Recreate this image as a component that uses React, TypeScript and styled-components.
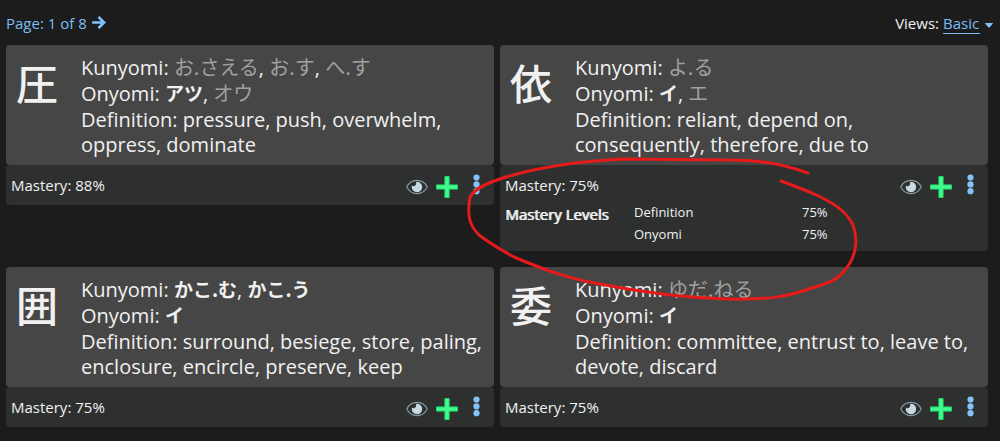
import React from "react";
import styled, { createGlobalStyle } from "styled-components";

const GlobalStyle = createGlobalStyle`
  * { box-sizing: border-box; }
  body {
    margin: 0;
    background: #1c1c1c;
    color: #f1f1f1;
    font-family: "Open Sans", "Noto Sans", "Noto Sans CJK JP", sans-serif;
    font-size: 15px;
    line-height: 20px;
  }
  button, select { font: inherit; color: inherit; }
`;

const Page = styled.div`
  position: relative;
  padding: 12px 12px 12px 6px;
`;

const TopBar = styled.header`
  display: flex;
  justify-content: space-between;
  align-items: center;
  height: 21px;
  margin: 0 -6px 12px 0;
`;

const Pager = styled.nav`
  display: flex;
  align-items: center;
  gap: 5px;
  color: #7cbdf5;
`;

const IconButton = styled.button`
  display: flex;
  padding: 0;
  border: 0;
  background: none;
  cursor: pointer;
`;

const ViewPicker = styled.label`
  display: flex;
  align-items: center;
  gap: 4px;
`;

const ViewSelect = styled.select`
  appearance: none;
  height: 20px;
  padding: 0;
  border: 0;
  border-radius: 0;
  box-shadow: 0 1px #7cbdf5;
  background: none;
  color: #7cbdf5;
  line-height: 20px;
`;

const CardGrid = styled.main`
  display: grid;
  grid-template-columns: repeat(2, minmax(0, 1fr));
  align-items: start;
  gap: 16px 6px;
`;

const Card = styled.article`
  min-width: 0;
`;

const CardBody = styled.div`
  display: flex;
  gap: 20px;
  min-height: 120px;
  padding: 10px 8px 8px 10px;
  border-radius: 4px;
  background: #464646;
`;

const Kanji = styled.h2`
  flex: none;
  width: 45px;
  margin: 5px 0 0;
  font-family: "Noto Sans CJK JP", sans-serif;
  font-size: 42px;
  font-weight: 500;
  line-height: 44px;
`;

const Readings = styled.div`
  min-width: 0;
  font-size: 20px;
  line-height: 26px;
`;

const Line = styled.p`
  margin: 0;
`;

const Definition = styled.p`
  margin: 0;
  line-height: 25px;
`;

const Reading = styled.span<{ $known: boolean }>`
  font-family: "Noto Sans CJK JP", sans-serif;
  font-size: ${(p) => (p.$known ? 19 : 20)}px;
  line-height: 20px;
  font-weight: ${(p) => (p.$known ? 700 : 400)};
  color: ${(p) => (p.$known ? "#f1f1f1" : "#a0a0a0")};
`;

const CardFooter = styled.div`
  border-radius: 4px;
  background: #2e3030;
`;

const FooterRow = styled.div`
  display: flex;
  justify-content: space-between;
  align-items: center;
  height: 40px;
  padding: 0 14px 0 5px;
`;

const Actions = styled.div`
  display: flex;
  align-items: center;
  gap: 8px;
  padding-top: 3px;
`;

const MoreButton = styled(IconButton)`
  margin: 0 0 5px 7px;
`;

const Levels = styled.section`
  display: flex;
  padding: 0 0 6px 5px;
`;

const LevelsTitle = styled.h3`
  width: 129px;
  margin: -1px 0 0;
  font-size: 15px;
  font-weight: 400;
  line-height: 20px;
  text-shadow: 1px 0 currentColor;
`;

const LevelTable = styled.table`
  border-collapse: collapse;
  font-size: 13px;
  line-height: 20px;
  margin-top: -4px;
  th { width: 168px; padding: 1px 0; font-weight: 400; text-align: left; }
  td { padding: 1px 0; }
`;

const Annotation = styled.svg`
  position: absolute;
  top: 0;
  left: 0;
  pointer-events: none;
`;

const ArrowIcon = () => (
  <svg width="14" height="14" viewBox="0 0 14 14" fill="none" stroke="#7fc1fa" strokeWidth="2.6" aria-hidden="true">
    <path d="M0.2 6.5H12M6.5 0.9L12.1 6.5L6.5 12.1" />
  </svg>
);

const CaretIcon = () => (
  <svg width="10" height="10" viewBox="0 0 10 10" aria-hidden="true">
    <path d="M0.8 5H9.2L5.8 9.2Q5 10 4.2 9.2Z" fill="#84c3f9" />
  </svg>
);

const EyeIcon = () => (
  <svg width="22" height="16" viewBox="0 0 22 16" aria-hidden="true">
    <path d="M0.8 8C5 -0.8 17 -0.8 21.2 8C17 16.8 5 16.8 0.8 8Z" fill="none" stroke="#87979d" strokeWidth="1.2" />
    <path d="M11 2.8A5.2 5.2 0 1 1 6 6.5C7 8.2 11.2 6.8 10 3Z" fill="#c5dae4" />
  </svg>
);

const PlusIcon = () => (
  <svg width="22" height="22" viewBox="0 0 22 22" aria-hidden="true">
    <path d="M8.9 0.5H13.1V8.9H21.5V13.1H13.1V21.5H8.9V13.1H0.5V8.9H8.9Z" fill="#42fb8d" stroke="#20d76b" strokeWidth="1" />
  </svg>
);

const DotsIcon = () => (
  <svg width="7" height="21" viewBox="0 0 7 21" fill="#84c3f9" aria-hidden="true">
    <circle cx="3.5" cy="3.5" r="3.1" />
    <circle cx="3.5" cy="10.4" r="3.1" />
    <circle cx="3.5" cy="17.2" r="3.1" />
  </svg>
);

type ReadingItem = { text: string; known?: boolean };
type Entry = {
  kanji: string;
  kunyomi: ReadingItem[];
  onyomi: ReadingItem[];
  definition: string;
  mastery: string;
  levels?: [string, string][];
};

const entries: Entry[] = [
  {
    kanji: "圧",
    kunyomi: [{ text: "お.さえる" }, { text: "お.す" }, { text: "へ.す" }],
    onyomi: [{ text: "アツ", known: true }, { text: "オウ" }],
    definition: "pressure, push, overwhelm, oppress, dominate",
    mastery: "88%",
  },
  {
    kanji: "依",
    kunyomi: [{ text: "よ.る" }],
    onyomi: [{ text: "イ", known: true }, { text: "エ" }],
    definition: "reliant, depend on, consequently, therefore, due to",
    mastery: "75%",
    levels: [["Definition", "75%"], ["Onyomi", "75%"]],
  },
  {
    kanji: "囲",
    kunyomi: [{ text: "かこ.む", known: true }, { text: "かこ.う", known: true }],
    onyomi: [{ text: "イ", known: true }],
    definition: "surround, besiege, store, paling, enclosure, encircle, preserve, keep",
    mastery: "75%",
  },
  {
    kanji: "委",
    kunyomi: [{ text: "ゆだ.ねる" }],
    onyomi: [{ text: "イ", known: true }],
    definition: "committee, entrust to, leave to, devote, discard",
    mastery: "75%",
  },
];

const ReadingLine = ({ label, items }: { label: string; items: ReadingItem[] }) => (
  <Line>
    {label}:{" "}
    {items.map((item, i) => (
      <React.Fragment key={item.text}>
        {i > 0 && ", "}
        <Reading lang="ja" $known={!!item.known}>{item.text}</Reading>
      </React.Fragment>
    ))}
  </Line>
);

const KanjiCard = ({ entry }: { entry: Entry }) => (
  <Card>
    <CardBody>
      <Kanji lang="ja">{entry.kanji}</Kanji>
      <Readings>
        <ReadingLine label="Kunyomi" items={entry.kunyomi} />
        <ReadingLine label="Onyomi" items={entry.onyomi} />
        <Definition>Definition: {entry.definition}</Definition>
      </Readings>
    </CardBody>
    <CardFooter>
      <FooterRow>
        <span>Mastery: {entry.mastery}</span>
        <Actions>
          <IconButton aria-label="Show details"><EyeIcon /></IconButton>
          <IconButton aria-label="Add"><PlusIcon /></IconButton>
          <MoreButton aria-label="More options"><DotsIcon /></MoreButton>
        </Actions>
      </FooterRow>
      {entry.levels && (
        <Levels>
          <LevelsTitle>Mastery Levels</LevelsTitle>
          <LevelTable>
            <tbody>
              {entry.levels.map(([name, value]) => (
                <tr key={name}>
                  <th scope="row">{name}</th>
                  <td>{value}</td>
                </tr>
              ))}
            </tbody>
          </LevelTable>
        </Levels>
      )}
    </CardFooter>
  </Card>
);

export default function App() {
  return (
    <>
      <GlobalStyle />
      <Page>
        <TopBar>
          <Pager aria-label="Pages">
            <span>Page: 1 of 8</span>
            <IconButton aria-label="Next page"><ArrowIcon /></IconButton>
          </Pager>
          <ViewPicker>
            Views:
            <ViewSelect defaultValue="Basic">
              <option>Basic</option>
            </ViewSelect>
            <CaretIcon />
          </ViewPicker>
        </TopBar>
        <CardGrid>
          {entries.map((entry) => <KanjiCard key={entry.kanji} entry={entry} />)}
        </CardGrid>
        <Annotation width="1000" height="441" viewBox="0 0 1000 441" fill="none" aria-hidden="true">
          <path
            d="M808 173C780 163 757 160 728 160L622 159C570 162 533 168 500 179C482 185 474 190 470 197C467 215 469 225 479 235C492 245 501 250 514 257C540 268 565 278 600 284C650 294 690 298 728 299C770 300 790 296 812 288C832 282 838 279 845 270C857 256 858 238 853 225C846 210 830 201 812 193C802 189 792 185 781 181"
            stroke="#e51a1a"
            strokeWidth="3"
            strokeLinecap="round"
            strokeLinejoin="round"
          />
        </Annotation>
      </Page>
    </>
  );
}
